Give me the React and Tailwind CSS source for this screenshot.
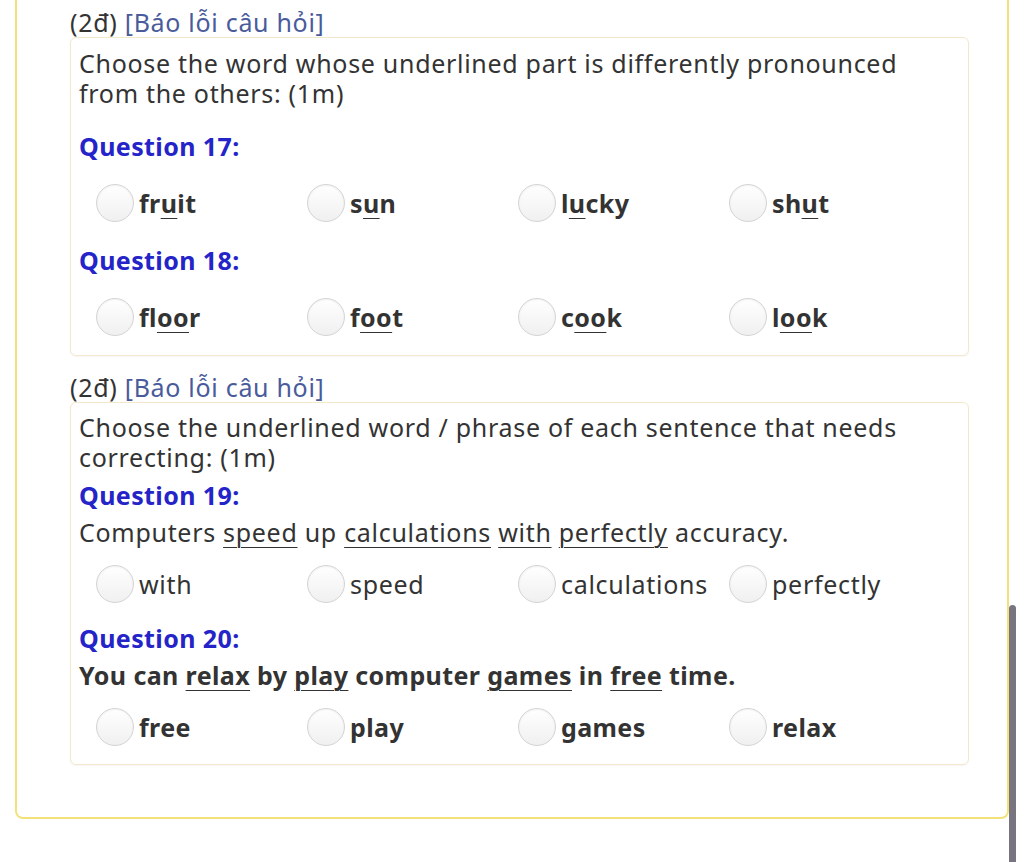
const Radio = () => (
  <span className="inline-block w-[38px] h-[38px] shrink-0 rounded-full border border-[#d4d4d4] bg-gradient-to-b from-white to-[#f0f0f0] shadow-[inset_0_1px_2px_rgba(0,0,0,0.06)]" />
);

const U = ({ children }) => (
  <span className="underline decoration-1 underline-offset-[5px]">{children}</span>
);

// one row of four answer choices
const Options = ({ items, bold }) => (
  <div className="grid grid-cols-[211px_211px_211px_211px] ml-[17px]">
    {items.map((item, i) => (
      <label key={i} className="flex items-center h-[38px]">
        <Radio />
        <span className={`ml-[5px] mt-[2px] ${bold ? "font-bold tracking-[0.4px]" : ""}`}>{item}</span>
      </label>
    ))}
  </div>
);

const Header = () => (
  <div className="h-[30px] leading-[30px] text-[#333]">
    (2đ) <span className="text-[#4a5b9c]">[Báo lỗi câu hỏi]</span>
  </div>
);

const QTitle = ({ children }) => (
  <div className="h-[30px] leading-[30px] font-bold tracking-[0.4px] text-[#2424c8]">{children}</div>
);

export default function App() {
  return (
    <div
      className="relative w-[1024px] h-[862px] bg-white overflow-hidden text-[25px] tracking-[0.7px] text-[#333]"
      style={{ fontFamily: "'Noto Sans', Lato, sans-serif" }}
    >
      <div className="ml-[15px] w-[994px] border-x-2 border-b-2 border-[#f3e27c] rounded-b-[8px] pl-[53px] pr-[38px] pt-[7px] pb-[52px]">
        <Header />
        <div className="border border-[#f3e7cc] rounded-[6px] shadow-[0_1px_2px_rgba(0,0,0,0.04)] px-[8px] pt-[10px] pb-[19px] flex flex-col gap-[23px]">
          <div className="leading-[30px]">
            Choose the word whose underlined part is differently pronounced
            <br />
            from the others: (1m)
          </div>
          <QTitle>Question 17:</QTitle>
          <Options
            bold
            items={[
              <>fr<U>u</U>it</>,
              <>s<U>u</U>n</>,
              <>l<U>u</U>cky</>,
              <>sh<U>u</U>t</>,
            ]}
          />
          <QTitle>Question 18:</QTitle>
          <Options
            bold
            items={[
              <>fl<U>oo</U>r</>,
              <>f<U>oo</U>t</>,
              <>c<U>oo</U>k</>,
              <>l<U>oo</U>k</>,
            ]}
          />
        </div>

        <div className="mt-[16px]">
          <Header />
        </div>
        <div className="border border-[#f3e7cc] rounded-[6px] shadow-[0_1px_2px_rgba(0,0,0,0.04)] px-[8px] pt-[9px] pb-[18px]">
          <div className="leading-[30px]">
            Choose the underlined word / phrase of each sentence that needs
            <br />
            correcting: (1m)
          </div>
          <div className="mt-[8px]">
            <QTitle>Question 19:</QTitle>
          </div>
          <div className="mt-[7px] leading-[30px]">
            Computers <U>speed</U> up <U>calculations</U> <U>with</U> <U>perfectly</U> accuracy.
          </div>
          <div className="mt-[18px]">
            <Options items={["with", "speed", "calculations", "perfectly"]} />
          </div>
          <div className="mt-[20px]">
            <QTitle>Question 20:</QTitle>
          </div>
          <div className="mt-[7px] leading-[30px] font-bold tracking-[0.4px]">
            You can <U>relax</U> by <U>play</U> computer <U>games</U> in <U>free</U> time.
          </div>
          <div className="mt-[18px]">
            <Options bold items={["free", "play", "games", "relax"]} />
          </div>
        </div>
      </div>

      {/* page scrollbar */}
      <div className="absolute left-[1009px] top-[605px] w-[7px] h-[257px] rounded-t-[4px] bg-[#787480]" />
    </div>
  );
}
